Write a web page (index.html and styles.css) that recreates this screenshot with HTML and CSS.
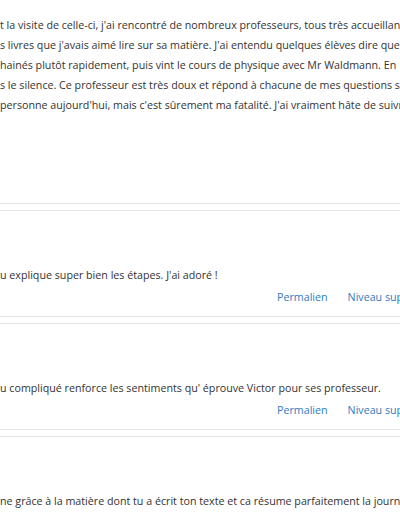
FILE: index.html
```html
<!DOCTYPE html>
<html>

<head>
    <title>Discussion</title>
    <link rel="stylesheet" href="styles.css">
</head>

<body>
    <div class="post first">
        <div class="post-text">
            <div class="line">t la visite de celle-ci, j'ai rencontré de nombreux professeurs, tous très accueillants</div>
            <div class="line">s livres que j'avais aimé lire sur sa matière. J'ai entendu quelques élèves dire que</div>
            <div class="line">hainés plutôt rapidement, puis vint le cours de physique avec Mr Waldmann. En</div>
            <div class="line">s le silence. Ce professeur est très doux et répond à chacune de mes questions sans</div>
            <div class="line">personne aujourd'hui, mais c'est sûrement ma fatalité. J'ai vraiment hâte de suivre</div>
        </div>
    </div>

    <div class="post">
        <div class="post-text">
            <div class="line">u explique super bien les étapes. J'ai adoré !</div>
        </div>
        <div class="post-links">
            <a href="#">Permalien</a>
            <a href="#">Niveau supérieur</a>
        </div>
    </div>

    <div class="post">
        <div class="post-text">
            <div class="line">u compliqué renforce les sentiments qu' éprouve Victor pour ses professeur.</div>
        </div>
        <div class="post-links">
            <a href="#">Permalien</a>
            <a href="#">Niveau supérieur</a>
        </div>
    </div>

    <div class="post">
        <div class="post-text">
            <div class="line">ne grâce à la matière dont tu a écrit ton texte et ca résume parfaitement la journée</div>
        </div>
        <div class="post-links">
            <a href="#">Permalien</a>
            <a href="#">Niveau supérieur</a>
        </div>
    </div>
</body>

</html>
```

FILE: styles.css
```css
html,
body {
    margin: 0;
    overflow: hidden;
    background-color: #fff;
}

body {
    width: 400px;
    height: 516px;
    font-family: "Open Sans", "Noto Sans", sans-serif;
    font-size: 10.7px;
    line-height: 20px;
    color: #333;
}

.post {
    width: 400px;
    border-top: 1px solid #e6e6e6;
    border-bottom: 1px solid #e6e6e6;
    margin-bottom: 6px;
    padding: 54px 0 9px 0;
}

.post.first {
    border-top: none;
    padding: 15px 0 88px 0;
}

.line {
    white-space: nowrap;
}

.post-links {
    display: flex;
    gap: 20px;
    margin-top: 2px;
    padding-left: 277px;
    white-space: nowrap;
}

.post-links a {
    color: #2f7bbf;
    text-decoration: none;
}
```
